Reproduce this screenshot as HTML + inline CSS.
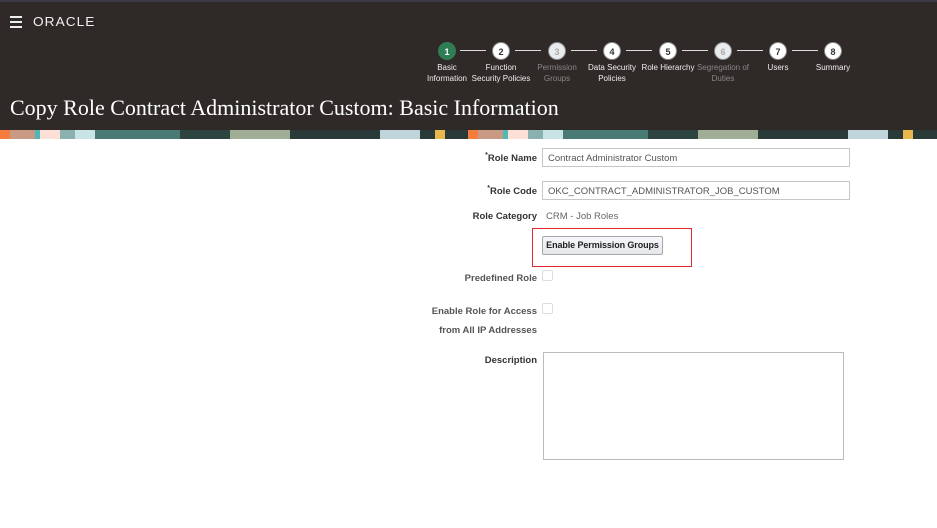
<!DOCTYPE html>
<html><head><meta charset="utf-8"><style>
*{margin:0;padding:0;box-sizing:border-box}
body{width:937px;height:528px;background:#fff;font-family:"Liberation Sans",sans-serif;position:relative;overflow:hidden}
.hdr{position:absolute;left:0;top:0;width:937px;height:130px;background:#2f2a27;border-top:2px solid #3d3a44}
.strip{position:absolute;left:0;top:130px;width:937px;height:9px;display:flex}
.strip div{height:9px}
.menu{position:absolute;left:10px;top:14px;width:12px}
.menu i{display:block;height:2px;background:#eee;margin-bottom:3px}
.logo{position:absolute;left:33px;top:12px;color:#f0f0f0;font-size:13px;letter-spacing:1px;font-weight:normal;transform:scaleX(1.05);transform-origin:left}
.title{position:absolute;left:10px;top:93px;color:#fff;font-family:"Liberation Serif",serif;font-size:22px}
.step{position:absolute;top:40px;width:90px;text-align:center;font-size:8px;color:#eee;line-height:11px}
.step .c{width:18px;height:18px;border-radius:50%;background:#fff;color:#333;font-weight:bold;font-size:9px;line-height:18px;margin:0 auto 2px;border:1px solid #888}
.step.dis{color:#888}.step.dis .c{background:#e8ecee;color:#aaa}
.step.act .c{background:#2e7d55;color:#fff;border-color:#2e7d55}
.line{position:absolute;top:48px;height:1px;background:#ddd;width:26px}
.lbl{position:absolute;font-size:9.5px;font-weight:bold;color:#333;text-align:right;right:400px;white-space:nowrap}
.lbl.g{color:#555}
.lbl sup{font-size:7px;color:#333}
.inp{position:absolute;left:542px;width:308px;height:19px;border:1px solid #c7c7c7;font-size:9.5px;color:#555;padding:4px 5px}
.cb{position:absolute;left:542px;width:11px;height:11px;border:1px solid #ddd;border-radius:2px}
</style></head><body>
<div class="hdr">
<div class="menu"><i></i><i></i><i></i></div>
<div class="logo">ORACLE</div>
<div class="step act" style="left:402px"><div class="c">1</div>Basic<br>Information</div>
<div class="line" style="left:460px"></div>
<div class="step" style="left:456px"><div class="c">2</div>Function<br>Security Policies</div>
<div class="line" style="left:515px"></div>
<div class="step dis" style="left:512px"><div class="c">3</div>Permission<br>Groups</div>
<div class="line" style="left:571px"></div>
<div class="step" style="left:567px"><div class="c">4</div>Data Security<br>Policies</div>
<div class="line" style="left:626px"></div>
<div class="step" style="left:623px"><div class="c">5</div>Role Hierarchy</div>
<div class="line" style="left:682px"></div>
<div class="step dis" style="left:678px"><div class="c">6</div>Segregation of<br>Duties</div>
<div class="line" style="left:737px"></div>
<div class="step" style="left:733px"><div class="c">7</div>Users</div>
<div class="line" style="left:792px"></div>
<div class="step" style="left:788px"><div class="c">8</div>Summary</div>
<div class="title">Copy Role Contract Administrator Custom: Basic Information</div>
</div>
<div class="strip">
<div style="width:10px;background:#f47c3c"></div><div style="width:25px;background:#c89a84"></div><div style="width:5px;background:#4fb8b4"></div><div style="width:20px;background:#fde0d8"></div><div style="width:15px;background:#8ab0b0"></div><div style="width:20px;background:#c8e4e4"></div><div style="width:85px;background:#4a7a74"></div><div style="width:50px;background:#2d4440"></div><div style="width:60px;background:#9fae94"></div><div style="width:90px;background:#2a3a38"></div><div style="width:40px;background:#c0d4dc"></div><div style="width:15px;background:#2a3a38"></div><div style="width:10px;background:#e8b84c"></div><div style="width:23px;background:#2a3a38"></div>
<div style="width:10px;background:#f47c3c"></div><div style="width:25px;background:#c89a84"></div><div style="width:5px;background:#4fb8b4"></div><div style="width:20px;background:#fde0d8"></div><div style="width:15px;background:#8ab0b0"></div><div style="width:20px;background:#c8e4e4"></div><div style="width:85px;background:#4a7a74"></div><div style="width:50px;background:#2d4440"></div><div style="width:60px;background:#9fae94"></div><div style="width:90px;background:#2a3a38"></div><div style="width:40px;background:#c0d4dc"></div><div style="width:15px;background:#2a3a38"></div><div style="width:10px;background:#e8b84c"></div><div style="flex:1;background:#2a3a38"></div>
</div>
<div class="lbl" style="top:152px"><sup>*</sup>Role Name</div>
<div class="inp" style="top:148px">Contract Administrator Custom</div>
<div class="lbl" style="top:185px"><sup>*</sup>Role Code</div>
<div class="inp" style="top:181px">OKC_CONTRACT_ADMINISTRATOR_JOB_CUSTOM</div>
<div class="lbl" style="top:211px">Role Category</div>
<div style="position:absolute;left:546px;top:211px;font-size:9.5px;color:#666">CRM - Job Roles</div>
<div style="position:absolute;left:532px;top:228px;width:160px;height:39px;border:1px solid #e0262f"></div>
<div style="position:absolute;left:542px;top:236px;width:121px;height:19px;border:1px solid #a8a8a8;border-radius:2px;background:linear-gradient(#f7f8fa,#e4e7eb);font-size:9px;font-weight:bold;color:#222;text-align:center;line-height:17px;white-space:nowrap;letter-spacing:-0.1px">Enable Permission Groups</div>
<div class="lbl g" style="top:273px">Predefined Role</div>
<div class="cb" style="top:270px"></div>
<div class="lbl g" style="top:302px;line-height:19px;text-align:right">Enable Role for Access<br>from All IP Addresses</div>
<div class="cb" style="top:303px"></div>
<div class="lbl" style="top:355px">Description</div>
<div style="position:absolute;left:543px;top:352px;width:301px;height:108px;border:1px solid #bbb"></div>
</body></html>
